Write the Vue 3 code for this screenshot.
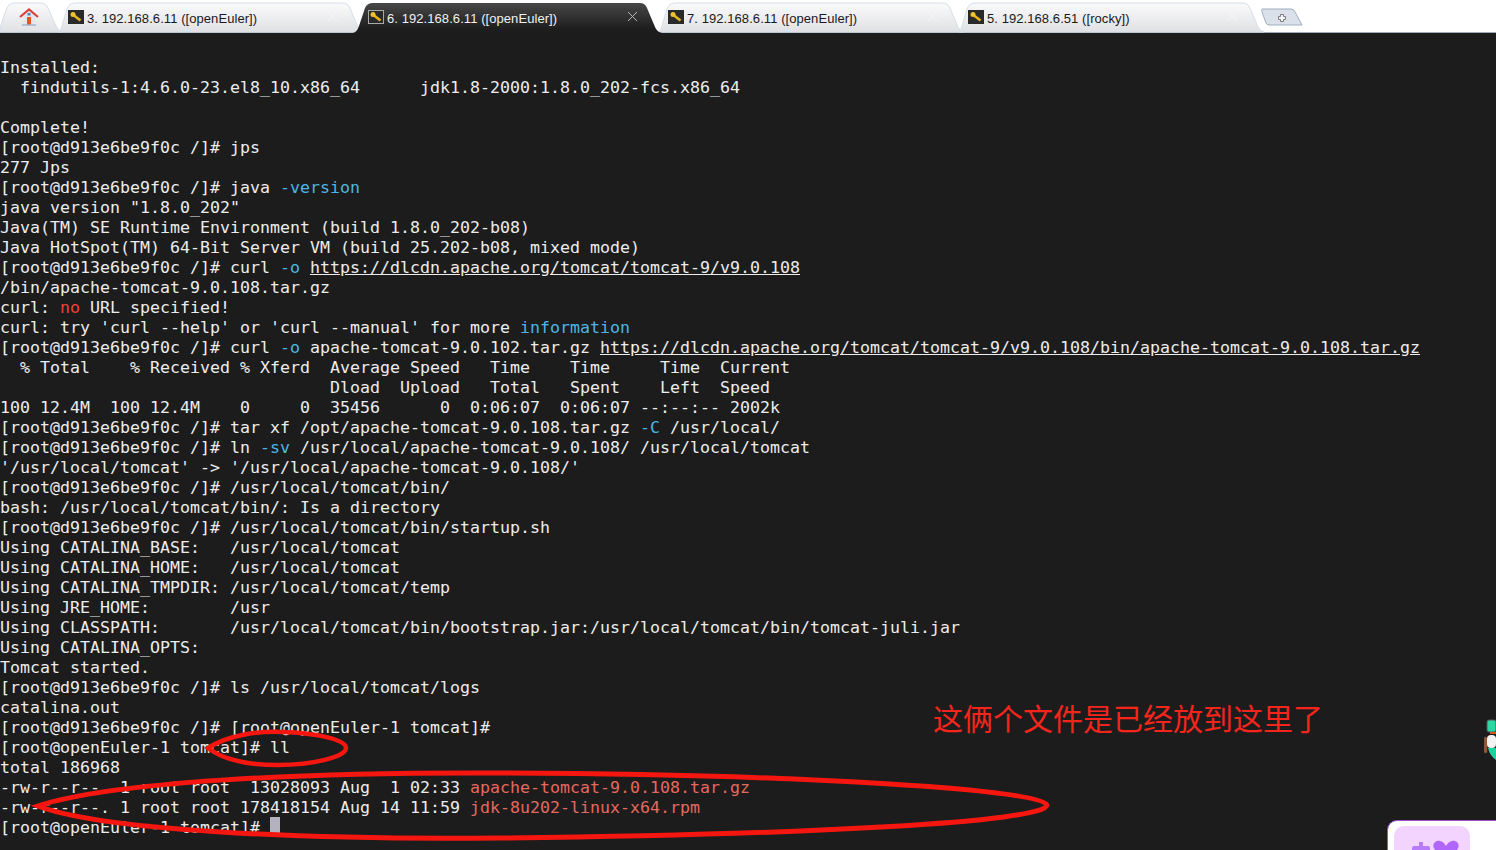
<script setup>
const tabs = [
  { label: '3. 192.168.6.11 ([openEuler])' },
  { label: '6. 192.168.6.11 ([openEuler])', active: true },
  { label: '7. 192.168.6.11 ([openEuler])' },
  { label: '5. 192.168.6.51 ([rocky])' }
]
const p = '[root@d913e6be9f0c /]# '
const lines = [
  [''],
  ['Installed:'],
  ['  findutils-1:4.6.0-23.el8_10.x86_64      jdk1.8-2000:1.8.0_202-fcs.x86_64'],
  [''],
  ['Complete!'],
  [p + 'jps'],
  ['277 Jps'],
  [p + 'java ', { b: '-version' }],
  ['java version "1.8.0_202"'],
  ['Java(TM) SE Runtime Environment (build 1.8.0_202-b08)'],
  ['Java HotSpot(TM) 64-Bit Server VM (build 25.202-b08, mixed mode)'],
  [p + 'curl ', { b: '-o' }, ' ', { u: 'https://dlcdn.apache.org/tomcat/tomcat-9/v9.0.108' }],
  ['/bin/apache-tomcat-9.0.108.tar.gz'],
  ['curl: ', { r: 'no' }, ' URL specified!'],
  ["curl: try 'curl --help' or 'curl --manual' for more ", { b: 'information' }],
  [p + 'curl ', { b: '-o' }, ' apache-tomcat-9.0.102.tar.gz ', { u: 'https://dlcdn.apache.org/tomcat/tomcat-9/v9.0.108/bin/apache-tomcat-9.0.108.tar.gz' }],
  ['  % Total    % Received % Xferd  Average Speed   Time    Time     Time  Current'],
  ['                                 Dload  Upload   Total   Spent    Left  Speed'],
  ['100 12.4M  100 12.4M    0     0  35456      0  0:06:07  0:06:07 --:--:-- 2002k'],
  [p + 'tar xf /opt/apache-tomcat-9.0.108.tar.gz ', { b: '-C' }, ' /usr/local/'],
  [p + 'ln ', { b: '-sv' }, ' /usr/local/apache-tomcat-9.0.108/ /usr/local/tomcat'],
  ["'/usr/local/tomcat' -> '/usr/local/apache-tomcat-9.0.108/'"],
  [p + '/usr/local/tomcat/bin/'],
  ['bash: /usr/local/tomcat/bin/: Is a directory'],
  [p + '/usr/local/tomcat/bin/startup.sh'],
  ['Using CATALINA_BASE:   /usr/local/tomcat'],
  ['Using CATALINA_HOME:   /usr/local/tomcat'],
  ['Using CATALINA_TMPDIR: /usr/local/tomcat/temp'],
  ['Using JRE_HOME:        /usr'],
  ['Using CLASSPATH:       /usr/local/tomcat/bin/bootstrap.jar:/usr/local/tomcat/bin/tomcat-juli.jar'],
  ['Using CATALINA_OPTS:'],
  ['Tomcat started.'],
  [p + 'ls /usr/local/tomcat/logs'],
  ['catalina.out'],
  [p + '[root@openEuler-1 tomcat]#'],
  ['[root@openEuler-1 tomcat]# ll'],
  ['total 186968'],
  ['-rw-r--r--. 1 root root  13028093 Aug  1 02:33 ', { f: 'apache-tomcat-9.0.108.tar.gz' }],
  ['-rw-r--r--. 1 root root 178418154 Aug 14 11:59 ', { f: 'jdk-8u202-linux-x64.rpm' }],
  ['[root@openEuler-1 tomcat]# ', { c: true }]
]
const segs = (line) =>
  line.map((s) => {
    if (typeof s === 'string') return { t: s, k: '' }
    if (s.b) return { t: s.b, k: 'blue' }
    if (s.r) return { t: s.r, k: 'red' }
    if (s.u) return { t: s.u, k: 'link' }
    if (s.f) return { t: s.f, k: 'file' }
    return { t: '', k: 'cursor' }
  })
</script>

<template>
  <div class="screen">
    <div class="bar">
      <div class="tab home">
        <svg class="shape" width="70" height="33">
          <defs>
            <linearGradient id="inact" x1="0" y1="0" x2="0" y2="1">
              <stop offset="0" stop-color="#fafafb" />
              <stop offset="1" stop-color="#e0e1e4" />
            </linearGradient>
            <linearGradient id="act" x1="0" y1="0" x2="0" y2="1">
              <stop offset="0" stop-color="#484848" />
              <stop offset="0.85" stop-color="#1e1e1e" />
              <stop offset="1" stop-color="#1c1c1c" />
            </linearGradient>
          </defs>
          <path d="M0 28 L6 10 Q8 3 15 3 L40 3 Q46 3 48 8 L56 26 Q58 31 62 32 L0 32 Z" fill="url(#inact)" stroke="#d6dee8" />
        </svg>
        <svg class="house" width="20" height="18" viewBox="0 0 20 18">
          <path d="M4 8 L10 3 L16 8 V17 H4 Z" fill="#e3e6ee" />
          <path d="M8 9 H12 V17 H8 Z" fill="#e9541f" />
          <path d="M1 9 L10 1.5 L19 9" fill="none" stroke="#d9423a" stroke-width="2.2" />
          <rect x="8.5" y="5" width="3" height="2.5" fill="#4d7fc4" />
          <path d="M3 17 H17" stroke="#9db1cf" stroke-width="1.4" />
        </svg>
      </div>
      <div v-for="t in tabs" :key="t.label" class="tab" :class="{ active: t.active }">
        <svg class="shape" width="312" height="33">
          <path v-if="t.active" d="M-5 33 Q-1 32 1 26 L7 8 Q9 3 15 3 L282 3 Q287 3 289 8 L297 27 Q299 32 304 33 Z" fill="url(#act)" />
          <path v-else d="M1 32 Q3 31 4 26 L9 9 Q11 3 18 3 L284 3 Q290 3 292 8 L300 27 Q302 31 306 32 Z" fill="url(#inact)" stroke="#d6dee8" />
        </svg>
        <svg class="key" width="16" height="14" viewBox="0 0 16 14">
          <rect x="0.5" y="0.5" width="15" height="13" fill="#2a2a2a" :stroke="t.active ? '#a9a9a9' : '#2a2a2a'" />
          <path d="M6 5.5 L12.5 10.5" stroke="#e8b31c" stroke-width="2.6" />
          <circle cx="5" cy="4.5" r="2.5" fill="#f0c22e" />
        </svg>
        <span class="label">{{ t.label }}</span>
        <svg class="close" width="11" height="11" viewBox="0 0 11 11">
          <path d="M1 1 L10 10 M10 1 L1 10" :stroke="t.active ? '#b9b9b9' : '#f6f6f6'" stroke-width="1" fill="none" />
        </svg>
      </div>
      <div class="newtab">
        <svg width="42" height="18" viewBox="0 0 42 18">
          <path d="M1 1 H30 Q33 1 34 4 L41 17 H8 Q6 17 5 15 L1 4 Q0.5 1 1 1 Z" fill="#dae1ea" stroke="#9fadc0" />
          <path d="M19.5 6.5 h3 v2 h2 v3 h-2 v2 h-3 v-2 h-2 v-3 h2 z" fill="#f4f5f7" stroke="#7d7d7d" />
        </svg>
      </div>
    </div>

    <div class="term">
      <div v-for="(l, i) in lines" :key="i" class="line"><template v-for="(s, j) in segs(l)" :key="j"><span v-if="s.k === 'cursor'" class="cursor"></span><span v-else :class="s.k">{{ s.t }}</span></template></div>

      <div class="note">这俩个文件是已经放到这里了</div>

      <svg class="marks" width="1496" height="817" viewBox="0 33 1496 817">
        <path d="M208 748 C228 735 258 731 282 732 C318 733 346 740 346 748 C346 757 312 765 278 765 C246 765 222 759 208 748 Z" fill="none" stroke="#f5170f" stroke-width="4.5" />
        <path d="M38 806 C110 782 300 772 500 773 C800 774 1047 790 1047 805 C1047 822 800 835 500 838 C300 840 100 830 38 806 Z" fill="none" stroke="#f5170f" stroke-width="5" />
      </svg>

      <svg class="mascot" width="12" height="44" viewBox="0 0 12 44">
        <rect x="3" y="2" width="9" height="12" rx="2" fill="#27d9a0" stroke="#555" />
        <rect x="6" y="14" width="6" height="2" fill="#d2551f" />
        <rect x="0" y="19" width="3" height="16" rx="1.5" fill="#a4552c" stroke="#555" stroke-width=".6" />
        <rect x="3" y="17" width="9" height="13" rx="4" fill="#f2f2f2" />
        <path d="M4 30 H12 V42 Q6 38 4 30 Z" fill="#1fd0a0" />
      </svg>

      <div class="panel">
        <div class="pill">
          <svg width="60" height="24" viewBox="0 0 60 24">
            <path d="M17 4 h4 v4 h5 a2 2 0 0 1 2 2 v8 h-6 v6 h-6 v-6 h-6 v-8 a2 2 0 0 1 2 -2 h5 z" fill="#b87cf8" />
            <path d="M44 24 L33 12 C29 7 33 2 38 3 C41 3.5 43 6 44 8 C45 6 47 3.5 50 3 C55 2 59 7 55 12 Z" fill="#b066fb" />
          </svg>
        </div>
      </div>
    </div>
  </div>
</template>

<style scoped>
.screen {
  width: 1496px;
  height: 850px;
  overflow: hidden;
  background: #1c1c1c;
}
.bar {
  height: 33px;
  box-sizing: border-box;
  background: #fff;
  border-bottom: 1px solid #a2aebd;
  display: flex;
  align-items: stretch;
}
.tab {
  position: relative;
  width: 300px;
  box-sizing: border-box;
  padding-left: 10px;
  display: flex;
  align-items: center;
  font: 13px "Liberation Sans", Arial, sans-serif;
  color: #1a1a1a;
}
.tab.active {
  color: #f0f0f0;
  z-index: 2;
}
.tab.home {
  width: 58px;
  padding-left: 19px;
  z-index: 1;
}
.shape {
  position: absolute;
  left: 0;
  top: 0;
  overflow: visible;
}
.house,
.key,
.label,
.close {
  position: relative;
}
.house {
  top: 1px;
}
.key {
  flex: none;
  top: 1px;
}
.label {
  margin-left: 3px;
  top: 2px;
  letter-spacing: 0.07px;
  white-space: pre;
}
.close {
  margin-left: auto;
  margin-right: 20px;
}
.newtab {
  margin-left: 3px;
  padding-top: 8px;
  height: 18px;
}
.newtab svg {
  display: block;
}
.term {
  position: relative;
  height: 817px;
  box-sizing: border-box;
  padding-top: 5px;
  background: #1c1c1c;
  color: #ececec;
  font-family: "DejaVu Sans Mono", monospace;
  font-size: 16.61px;
  line-height: 20px;
}
.line {
  height: 20px;
  white-space: pre;
}
.blue {
  color: #4db5e6;
}
.red {
  color: #f0413a;
}
.link {
  text-decoration: underline;
}
.file {
  color: #e5695f;
}
.cursor {
  display: inline-block;
  width: 10px;
  height: 20px;
  margin-top: -1px;
  vertical-align: top;
  background: #b5b2bf;
}
.note {
  position: absolute;
  left: 933px;
  top: 666px;
  color: #f5251c;
  font-family: "Noto Sans CJK SC", sans-serif;
  font-size: 30px;
  line-height: 36px;
  font-weight: 400;
  white-space: pre;
}
.marks {
  position: absolute;
  left: 0;
  top: 0;
  pointer-events: none;
}
.mascot {
  position: absolute;
  left: 1484px;
  top: 685px;
}
.panel {
  position: absolute;
  left: 1387px;
  top: 787px;
  width: 140px;
  height: 60px;
  box-sizing: border-box;
  padding: 5px 6px;
  background: #fff;
  border: 1px solid #9a4fd0;
  border-radius: 10px;
}
.pill {
  width: 76px;
  height: 50px;
  border-radius: 10px;
  background: #f3d4ff;
  padding: 12px 0 0 8px;
  box-sizing: border-box;
}
.pill svg {
  display: block;
}
</style>
